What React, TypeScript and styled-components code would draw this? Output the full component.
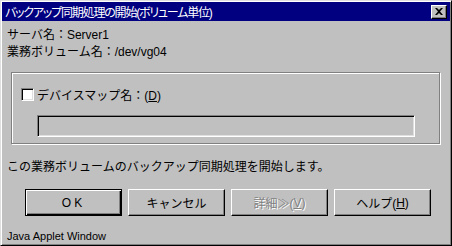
import styled, { createGlobalStyle } from 'styled-components';

const GlobalStyle = createGlobalStyle`
  html, body {
    margin: 0;
    padding: 0;
    background: #c0c0c0;
  }
  body {
    font-family: "Liberation Sans", "Noto Sans CJK JP", sans-serif;
    font-size: 12px;
    color: #000;
  }
`;

const Window = styled.div`
  box-sizing: border-box;
  width: 452px;
  height: 246px;
  display: flex;
  flex-direction: column;
  padding: 1px;
  background: #c0c0c0;
  border: 1px solid;
  border-color: #dfdfdf #000 #000 #dfdfdf;
  box-shadow: inset 1px 1px 0 #fff, inset -1px -1px 0 #808080;
`;

const TitleBar = styled.div`
  height: 19px;
  display: flex;
  align-items: center;
  justify-content: space-between;
  padding: 0 3px 0 3px;
  background: #000080;
  color: #fff;
  font-size: 12px;
  font-feature-settings: "palt";
  letter-spacing: -1.2px;
`;

const CloseButton = styled.div`
  box-sizing: border-box;
  width: 16px;
  height: 14px;
  display: flex;
  align-items: center;
  justify-content: center;
  background: #c0c0c0;
  border: 1px solid;
  border-color: #fff #000 #000 #fff;
  box-shadow: inset -1px -1px 0 #808080;
`;

const Body = styled.div`
  flex: 1;
  display: flex;
  flex-direction: column;
  padding: 6px 0 0 5px;
`;

const Line = styled.div`
  height: 17px;
  line-height: 17px;
  white-space: nowrap;
`;

const GroupBox = styled.div`
  box-sizing: border-box;
  width: 429px;
  height: 72px;
  margin: 11px 0 0 4px;
  padding: 15px 0 6px 9px;
  border: 1px solid #808080;
  box-shadow: 1px 1px 0 #fff, inset 1px 1px 0 #fff;
  display: flex;
  flex-direction: column;
`;

const CheckRow = styled.label`
  height: 13px;
  display: flex;
  align-items: center;
  gap: 3px;
  white-space: nowrap;
`;

const CheckBox = styled.span`
  box-sizing: border-box;
  width: 13px;
  height: 13px;
  background: #fff;
  border: 1px solid;
  border-color: #808080 #fff #fff #808080;
  box-shadow: inset 1px 1px 0 #000, inset -1px -1px 0 #dfdfdf;
`;

const Field = styled.div`
  box-sizing: border-box;
  width: 378px;
  height: 22px;
  margin: 14px 0 0 16px;
  background: #c0c0c0;
  border: 1px solid;
  border-color: #808080 #fff #fff #808080;
  box-shadow: inset 1px 1px 0 #000, inset -1px -1px 0 #dfdfdf;
`;

const Message = styled(Line)`
  margin-top: 15px;
  height: 16px;
  line-height: 16px;
`;

const ButtonRow = styled.div`
  display: flex;
  gap: 6px;
  margin: 14px 0 0 18px;
`;

const Button = styled.div<{ $default?: boolean; $disabled?: boolean }>`
  box-sizing: border-box;
  width: 97px;
  height: 27px;
  display: flex;
  align-items: center;
  justify-content: center;
  white-space: nowrap;
  background: #c0c0c0;
  color: ${({ $disabled }) => ($disabled ? '#808080' : '#000')};
  text-shadow: ${({ $disabled }) => ($disabled ? '1px 1px 0 #fff' : 'none')};
  border: 1px solid;
  border-color: ${({ $default }) => ($default ? '#000' : '#fff #000 #000 #fff')};
  box-shadow: ${({ $default }) =>
    $default
      ? 'inset 1px 1px 0 #fff, inset -1px -1px 0 #000, inset -2px -2px 0 #808080'
      : 'inset -1px -1px 0 #808080'};
  letter-spacing: ${({ $default }) => ($default ? '3px' : '0')};
`;

const Key = styled.span`
  text-decoration: underline;
`;

const Status = styled.div`
  margin: 12px 0 0 0;
  height: 16px;
  line-height: 16px;
  font-size: 11px;
`;

function CloseIcon() {
  return (
    <svg width="8" height="7" viewBox="0 0 8 7">
      <path d="M0 0h2l2 2 2-2h2L5 3.5 8 7H6L4 5 2 7H0l3-3.5z" fill="#000" />
    </svg>
  );
}

export default function App() {
  return (
    <>
      <GlobalStyle />
      <Window>
        <TitleBar>
          <span>バックアップ同期処理の開始(ボリューム単位)</span>
          <CloseButton>
            <CloseIcon />
          </CloseButton>
        </TitleBar>
        <Body>
          <Line>サーバ名：Server1</Line>
          <Line>業務ボリューム名：/dev/vg04</Line>
          <GroupBox>
            <CheckRow>
              <CheckBox />
              <span>
                デバイスマップ名：(<Key>D</Key>)
              </span>
            </CheckRow>
            <Field />
          </GroupBox>
          <Message>この業務ボリュームのバックアップ同期処理を開始します。</Message>
          <ButtonRow>
            <Button $default>OK</Button>
            <Button>キャンセル</Button>
            <Button $disabled>
              詳細≫(<Key>V</Key>)
            </Button>
            <Button>
              ヘルプ(<Key>H</Key>)
            </Button>
          </ButtonRow>
          <Status>Java Applet Window</Status>
        </Body>
      </Window>
    </>
  );
}
